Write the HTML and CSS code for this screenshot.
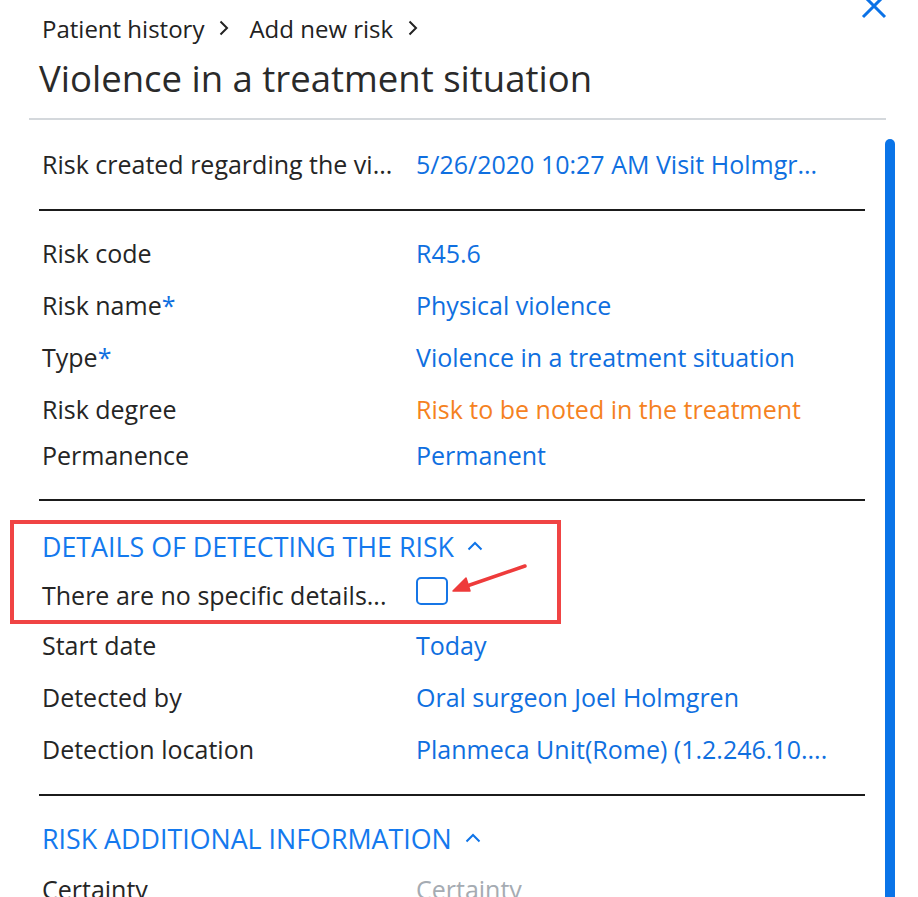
FILE: index.html
```html
<!DOCTYPE html>
<html lang="en">
<head>
<meta charset="utf-8">
<title>Violence in a treatment situation</title>
<link rel="stylesheet" href="styles.css">
</head>
<body>
<div class="panel">
  <button class="close" aria-label="Close">
    <svg width="26" height="26" viewBox="0 0 26 26"><path d="M2 2 L24 24 M24 2 L2 24" stroke="#0b72e7" stroke-width="3" fill="none"/></svg>
  </button>
  <nav class="crumbs">
    <span>Patient history</span>
    <svg class="crumb-chev" width="10" height="16" viewBox="0 0 10 16"><path d="M1.5 1.5 L8 8 L1.5 14.5" stroke="#222" stroke-width="2" fill="none"/></svg>
    <span>Add new risk</span>
    <svg class="crumb-chev" width="10" height="16" viewBox="0 0 10 16"><path d="M1.5 1.5 L8 8 L1.5 14.5" stroke="#222" stroke-width="2" fill="none"/></svg>
  </nav>
  <h1 class="title">Violence in a treatment situation</h1>
  <div class="header-rule"></div>

  <div class="body">
    <div class="scrollbar"></div>
    <div class="content">
      <div class="row first"><span class="label">Risk created regarding the vi...</span><span class="value">5/26/2020 10:27 AM Visit Holmgr...</span></div>
      <div class="rule rule-a"></div>

      <div class="group">
        <div class="row"><span class="label">Risk code</span><span class="value">R45.6</span></div>
        <div class="row"><span class="label">Risk name<span class="req">*</span></span><span class="value">Physical violence</span></div>
        <div class="row"><span class="label">Type<span class="req">*</span></span><span class="value">Violence in a treatment situation</span></div>
        <div class="row"><span class="label">Risk degree</span><span class="value orange">Risk to be noted in the treatment</span></div>
        <div class="row short"><span class="label">Permanence</span><span class="value">Permanent</span></div>
      </div>
      <div class="rule rule-b"></div>

      <div class="group group-2">
        <div class="row heading-row">
          <span class="section-title">DETAILS OF DETECTING THE RISK</span>
          <svg class="up-chev" width="16" height="10" viewBox="0 0 16 10"><path d="M1.5 8.5 L8 2 L14.5 8.5" stroke="#0f74e8" stroke-width="2" fill="none"/></svg>
        </div>
        <div class="row check-row"><span class="label">There are no specific details...</span><span class="value"><span class="checkbox"></span></span></div>
        <div class="row"><span class="label">Start date</span><span class="value">Today</span></div>
        <div class="row"><span class="label">Detected by</span><span class="value">Oral surgeon Joel Holmgren</span></div>
        <div class="row"><span class="label">Detection location</span><span class="value">Planmeca Unit(Rome) (1.2.246.10....</span></div>
      </div>
      <div class="rule rule-c"></div>

      <div class="group group-3">
        <div class="row heading-row">
          <span class="section-title">RISK ADDITIONAL INFORMATION</span>
          <svg class="up-chev" width="16" height="10" viewBox="0 0 16 10"><path d="M1.5 8.5 L8 2 L14.5 8.5" stroke="#0f74e8" stroke-width="2" fill="none"/></svg>
        </div>
        <div class="row"><span class="label">Certainty</span><span class="value placeholder">Certainty</span></div>
      </div>
    </div>
  </div>

  <div class="highlight"></div>
  <svg class="arrow" width="80" height="36" viewBox="0 0 80 36">
    <path d="M75 6 L14 27" stroke="#ee3b3b" stroke-width="3.5" stroke-linecap="round" fill="none"/>
    <path d="M3 31 L16 18 L20 31 Z" fill="#ee3b3b" stroke="#ee3b3b" stroke-width="1.5" stroke-linejoin="round"/>
  </svg>
</div>
</body>
</html>
```

FILE: styles.css
```css
html, body {
  margin: 0;
  padding: 0;
  background: #ffffff;
}

body {
  font-family: "Open Sans", "Noto Sans", "Liberation Sans", sans-serif;
  color: #222222;
  width: 918px;
  height: 897px;
  overflow: hidden;
}

.panel {
  position: relative;
  width: 918px;
  height: 897px;
  overflow: hidden;
}

.close {
  position: absolute;
  top: -7px;
  left: 861px;
  padding: 0;
  border: 0;
  background: transparent;
  width: 26px;
  height: 26px;
}

.crumbs {
  display: flex;
  align-items: center;
  margin: 12px 0 0 42px;
  height: 32px;
  font-size: 24px;
  color: #222;
}

.crumb-chev {
  margin: 0 20px 0 15px;
}

.title {
  margin: 8px 0 0 39px;
  height: 52px;
  line-height: 52px;
  font-size: 36.5px;
  font-weight: 400;
  color: #2a2a2a;
}

.header-rule {
  margin: 14px 0 0 29px;
  width: 857px;
  height: 2px;
  background: #d4d8dc;
}

.body {
  position: relative;
}

.scrollbar {
  position: absolute;
  left: 885px;
  top: 19px;
  width: 10px;
  height: 900px;
  border-radius: 5px 5px 0 0;
  background: #0a74e8;
}

.content {
  margin-left: 39px;
  width: 826px;
  padding-top: 18px;
}

.row {
  display: flex;
  align-items: center;
  height: 52px;
  font-size: 25px;
}

.row.short {
  height: 40px;
}

.label {
  width: 374px;
  padding-left: 3px;
  white-space: nowrap;
  color: #252525;
}

.value {
  color: #0f6fe0;
  white-space: nowrap;
}

.value.orange {
  color: #f5821f;
}

.value.placeholder {
  color: #a5abb2;
}

.req {
  color: #0f6fe0;
}

.rule {
  height: 2px;
  background: #1b1b1b;
}

.rule-a {
  margin-top: 19px;
}

.group {
  padding-top: 16px;
}

.rule-b {
  margin-top: 24px;
}

.group-2 {
  padding-top: 20px;
}

.heading-row {
  height: 50px;
  padding-left: 3px;
}

.section-title {
  color: #1479ee;
  font-size: 26.8px;
}

.up-chev {
  margin-left: 13px;
}

.check-row {
  height: 48px;
}

.checkbox {
  display: block;
  width: 28px;
  height: 24px;
  margin-bottom: 8px;
  border: 2px solid #1676e6;
  border-radius: 5px;
}

.rule-c {
  margin-top: 19px;
}

.group-3 {
  padding-top: 17px;
}

.highlight {
  position: absolute;
  left: 10px;
  top: 520px;
  width: 543px;
  height: 96px;
  border: 4px solid #f04444;
}

.arrow {
  position: absolute;
  left: 450px;
  top: 560px;
}
```
